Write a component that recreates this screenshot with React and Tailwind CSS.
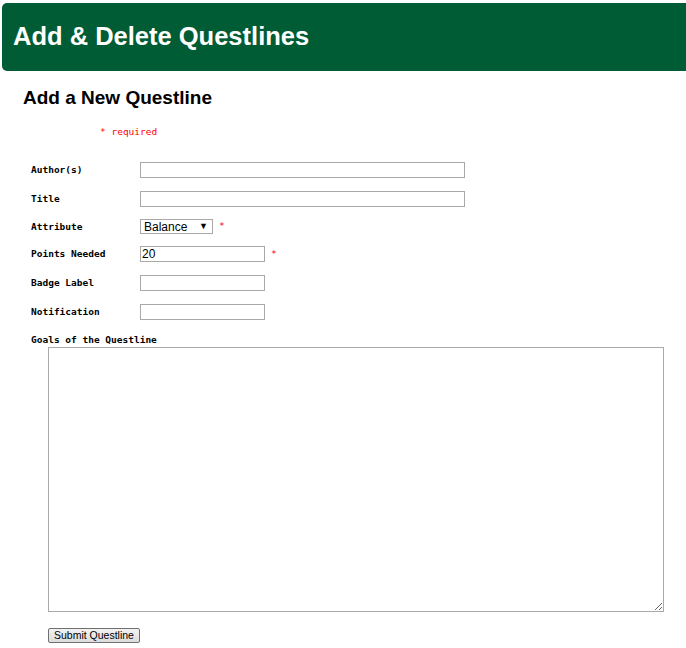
import React from 'react';

const mono = { fontFamily: '"DejaVu Sans Mono", "Liberation Mono", monospace' };

const fields = [
  { label: 'Author(s)', width: 'w-[325px]', h: 'h-[29px]' },
  { label: 'Title', width: 'w-[325px]', h: 'h-[29px]' },
  { label: 'Attribute', select: true, h: 'h-[27px]', required: true },
  { label: 'Points Needed', width: 'w-[125px]', h: 'h-[28px]', value: '20', required: true },
  { label: 'Badge Label', width: 'w-[125px]', h: 'h-[29px]' },
  { label: 'Notification', width: 'w-[125px]', h: 'h-[29px]' },
];

const Required = () => (
  <span className="ml-[6px] text-[9.5px] text-[#ff0000]" style={mono}>*</span>
);

const App = () => {
  return (
    <div className="min-h-screen bg-white text-black font-['Liberation_Sans',Arial,sans-serif]">
      <div className="mt-[3px] ml-[2px] flex h-[68px] items-center rounded-l-[5px] bg-[#005c35] pl-[11px]">
        <h1 className="text-[25.5px] font-bold leading-none text-white">Add &amp; Delete Questlines</h1>
      </div>

      <h3 className="mt-[16px] pl-[23px] text-[19px] font-bold leading-[22px]">Add a New Questline</h3>

      <p className="mt-[17px] pl-[100px] text-[9.5px] leading-[12px] text-[#ff0000]" style={mono}>
        * required
      </p>

      <form className="mt-[17px]" onSubmit={(e) => e.preventDefault()}>
        {fields.map((f) => (
          <div key={f.label} className={`flex items-center pl-[31px] ${f.h}`}>
            <label className="w-[109px] text-[9.5px] font-bold leading-[12px]" style={mono}>
              {f.label}
            </label>
            {f.select ? (
              <div className="flex h-[15px] w-[73px] items-center justify-between border border-[#a9a9a9] bg-white pl-[3px] pr-[4px] text-[12px] leading-none">
                <span>Balance</span>
                <span className="text-[9px]">▼</span>
              </div>
            ) : (
              <input
                type="text"
                defaultValue={f.value || ''}
                className={`${f.width} h-[16px] border border-[#a9a9a9] bg-white px-[1px] text-[12px] leading-none outline-none`}
              />
            )}
            {f.required && <Required />}
          </div>
        ))}

        <div className="mt-[8px] pl-[31px] text-[9.5px] font-bold leading-[12px]" style={mono}>
          Goals of the Questline
        </div>
        <textarea className="ml-[48px] mt-[1px] block h-[265px] w-[616px] border border-[#a9a9a9] bg-white text-[12px] outline-none" />

        <button
          type="submit"
          className="ml-[48px] mt-[16px] block h-[15px] rounded-[2px] border border-[#707070] bg-gradient-to-b from-[#f2f2f2] to-[#dddddd] px-[5px] text-[10.5px] leading-none text-black"
        >
          Submit Questline
        </button>
      </form>
    </div>
  );
};

export default App;
